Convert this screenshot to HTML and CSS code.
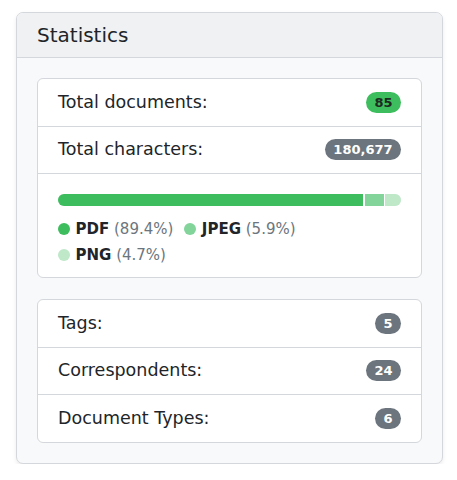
FILE: index.html
```html
<!DOCTYPE html>
<html lang="en">
<head>
<meta charset="utf-8">
<title>Statistics</title>
<link rel="stylesheet" href="styles.css">
</head>
<body>
<div class="page">
  <section class="widget">
    <header class="widget-header">Statistics</header>
    <div class="widget-body">
      <ul class="list">
        <li class="row"><span>Total documents:</span><span class="badge badge-green">85</span></li>
        <li class="row"><span>Total characters:</span><span class="badge badge-gray">180,677</span></li>
        <li class="row row-chart">
          <div class="bar">
            <div class="seg seg-pdf" style="width:89.4%"></div>
            <div class="seg seg-jpeg" style="width:5.9%"></div>
            <div class="seg seg-png" style="width:4.7%"></div>
          </div>
          <div class="legend">
            <span class="legend-item"><span class="dot dot-pdf"></span><b>PDF</b> <span class="pct">(89.4%)</span></span>
            <span class="legend-item"><span class="dot dot-jpeg"></span><b>JPEG</b> <span class="pct">(5.9%)</span></span>
            <span class="legend-item"><span class="dot dot-png"></span><b>PNG</b> <span class="pct">(4.7%)</span></span>
          </div>
        </li>
      </ul>
      <ul class="list list-second">
        <li class="row"><span>Tags:</span><span class="badge badge-gray">5</span></li>
        <li class="row"><span>Correspondents:</span><span class="badge badge-gray">24</span></li>
        <li class="row"><span>Document Types:</span><span class="badge badge-gray">6</span></li>
      </ul>
    </div>
  </section>
</div>
</body>
</html>
```
FILE: styles.css
```css
* { box-sizing: border-box; }
html, body { margin: 0; padding: 0; background: #ffffff; }
body {
  font-family: "DejaVu Sans", "Noto Sans", sans-serif;
  font-size: 17.5px;
  line-height: 1.5;
  color: #212529;
}
.page { padding: 12px 14px 0 16px; }
.widget {
  width: 427px;
  border: 1px solid #d4d7dc;
  border-radius: 7px;
  background: #f8f9fa;
  box-shadow: 0 2px 4px rgba(0, 0, 0, 0.08);
  overflow: hidden;
}
.widget-header {
  background: #f0f1f3;
  border-bottom: 1px solid #d4d7dc;
  padding: 10px 20px;
  font-size: 20px;
  line-height: 24px;
}
.widget-body { padding: 20px; }
.list {
  list-style: none;
  margin: 0;
  padding: 0;
  background: #ffffff;
  border: 1px solid #d4d7dc;
  border-radius: 6px;
}
.list-second { margin-top: 21px; }
.row {
  display: flex;
  align-items: center;
  justify-content: space-between;
  padding: 10.5px 20px;
  line-height: 25.5px;
}
.row + .row { border-top: 1px solid #d4d7dc; }
.row-chart {
  display: block;
  padding: 20px 20px 11px;
}
.badge {
  display: inline-block;
  font-size: 13px;
  font-weight: 700;
  line-height: 1;
  padding: 0.3em 0.65em;
  border-radius: 50rem;
}
.badge-green { background: #3ebd5e; color: #1c2a20; }
.badge-gray { background: #6c757d; color: #ffffff; }
.bar {
  display: flex;
  height: 12px;
  border-radius: 6px;
  overflow: hidden;
  background: #e9ecef;
  margin-bottom: 12px;
}
.seg { height: 100%; }
.seg-pdf { background: #3ebd5e; border-right: 2px solid #ffffff; }
.seg-jpeg { background: #82d49b; border-right: 1px solid #ffffff; }
.seg-png { background: #bfe8c9; }
.legend {
  display: flex;
  flex-wrap: wrap;
  column-gap: 11px;
  row-gap: 4px;
  font-size: 15px;
  line-height: 22px;
}
.legend-item { display: block; white-space: nowrap; }
.legend-item b { font-weight: 700; }
.dot {
  display: inline-block;
  vertical-align: -1px;
  width: 12px;
  height: 12px;
  border-radius: 50%;
  margin-right: 5.5px;
}
.dot-pdf { background: #3ebd5e; }
.dot-jpeg { background: #82d49b; }
.dot-png { background: #bfe8c9; }
.pct { color: #6c757d; }
```
